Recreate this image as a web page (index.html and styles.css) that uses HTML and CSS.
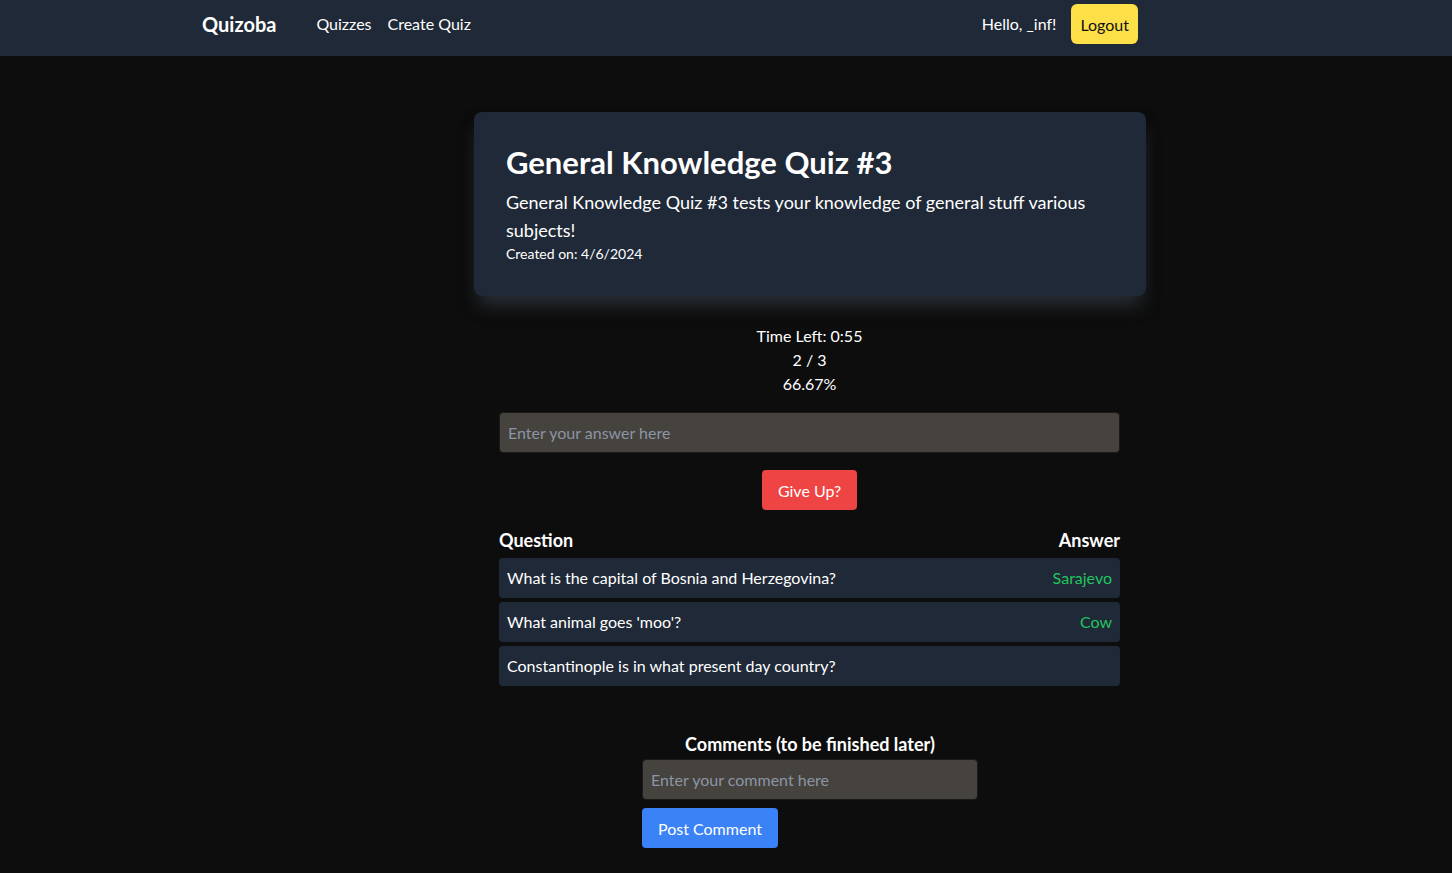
FILE: index.html
```
<!DOCTYPE html>
<html lang="en">
<head>
  <meta charset="UTF-8" />
  <meta name="viewport" content="width=device-width, initial-scale=1.0"/>
  <title>Quizoba - General Knowledge Quiz #3</title>
  <link rel="stylesheet" href="styles.css">
</head>
<body>
  <!-- Navbar -->
  <nav class="navbar">
    <div class="nav-left">
      <a class="brand" href="#">Quizoba</a>
      <div class="nav-links">
        <a href="#">Quizzes</a>
        <a href="#">Create Quiz</a>
      </div>
    </div>
    <div class="nav-right">
      <span class="hello">Hello, _inf!</span>
      <button class="logout-btn">Logout</button>
    </div>
  </nav>

  <main class="main">
    <div class="quiz-wrap">
      <!-- Quiz header card -->
      <div class="quiz-card">
        <h1>General Knowledge Quiz #3</h1>
        <p class="desc">General Knowledge Quiz #3 tests your knowledge of general stuff various subjects!</p>
        <p class="created">Created on: 4/6/2024</p>
      </div>

      <div class="quiz-body">
        <div class="status">
          <div>Time Left: 0:55</div>
          <div>2 / 3</div>
          <div>66.67%</div>
        </div>

        <input class="answer-input" type="text" placeholder="Enter your answer here">
        <div class="center">
          <button class="giveup-btn">Give Up?</button>
        </div>

        <div class="qa-head">
          <span>Question</span>
          <span>Answer</span>
        </div>
        <div class="qa-list">
          <div class="qa-row"><span>What is the capital of Bosnia and Herzegovina?</span><span class="answer">Sarajevo</span></div>
          <div class="qa-row"><span>What animal goes 'moo'?</span><span class="answer">Cow</span></div>
          <div class="qa-row"><span>Constantinople is in what present day country?</span><span class="answer"></span></div>
        </div>
      </div>

      <!-- Comments -->
      <div class="comments">
        <h2>Comments (to be finished later)</h2>
        <input class="comment-input" type="text" placeholder="Enter your comment here">
        <button class="post-btn">Post Comment</button>
      </div>
    </div>
  </main>
</body>
</html>
```

FILE: styles.css
```
* { box-sizing: border-box; }
body {
  margin: 0;
  background: #0d0d0d;
  color: #fff;
  font-family: Lato, "Open Sans", sans-serif;
  font-size: 16px;
  line-height: 24px;
}
a { color: inherit; text-decoration: none; }
button { font-family: inherit; font-size: 16px; border: none; cursor: pointer; }

/* Navbar */
.navbar {
  height: 56px;
  background: #1f2937;
  display: flex;
  justify-content: space-between;
  align-items: flex-start;
  padding: 4px 314px 0 202px;
}
.nav-left { display: flex; align-items: center; height: 40px; }
.brand { font-size: 20px; font-weight: 700; margin-right: 40px; }
.nav-links { display: flex; gap: 16px; }
.nav-right { display: flex; align-items: center; gap: 15px; height: 40px; }
.logout-btn {
  background: #fde047;
  color: #111;
  height: 40px;
  padding: 0 9px;
  border-radius: 6px;
}

/* Main */
.main {
  display: flex;
  justify-content: center;
  padding: 56px 0 24px 168px;
}
.quiz-wrap { width: 672px; }

.quiz-card {
  background: #1f2937;
  border-radius: 8px;
  padding: 32px;
  box-shadow: 0 12px 18px -4px rgba(75, 85, 99, 0.55), 0 4px 10px rgba(0, 0, 0, 0.5);
}
.quiz-card h1 { margin: 0 0 8px; font-size: 31px; line-height: 36px; font-weight: 700; }
.quiz-card .desc { margin: 0; font-size: 18px; line-height: 28px; }
.quiz-card .created { margin: 0; font-size: 14px; line-height: 20px; }

.quiz-body { padding: 28px 26px 0 25px; }
.status { text-align: center; }

.answer-input, .comment-input {
  display: block;
  width: 100%;
  height: 41px;
  background: #46423d;
  border: 1px solid #1a1a1a;
  border-radius: 4px;
  padding: 0 8px;
  color: #fff;
  font-family: inherit;
  font-size: 16px;
}
.answer-input { margin-top: 16px; }
.answer-input::placeholder, .comment-input::placeholder { color: #8b95a5; }

.center { display: flex; justify-content: center; margin-top: 17px; }
.giveup-btn {
  background: #ef4444;
  color: #fff;
  height: 40px;
  padding: 0 16px;
  border-radius: 4px;
}

.qa-head {
  display: flex;
  justify-content: space-between;
  margin-top: 16px;
  font-size: 18px;
  line-height: 28px;
  font-weight: 700;
}
.qa-list { display: flex; flex-direction: column; gap: 4px; margin-top: 4px; }
.qa-row {
  display: flex;
  justify-content: space-between;
  align-items: center;
  height: 40px;
  padding: 0 8px;
  background: #1f2937;
  border-radius: 4px;
}
.answer { color: #22c55e; }

/* Comments */
.comments { width: 336px; margin: 44px auto 0; }
.comments h2 {
  margin: 0;
  text-align: center;
  font-size: 18px;
  line-height: 28px;
  font-weight: 700;
  white-space: nowrap;
}
.comment-input { margin-top: 1px; }
.post-btn {
  margin-top: 8px;
  background: #3b82f6;
  color: #fff;
  height: 40px;
  padding: 0 16px;
  border-radius: 4px;
}
```
